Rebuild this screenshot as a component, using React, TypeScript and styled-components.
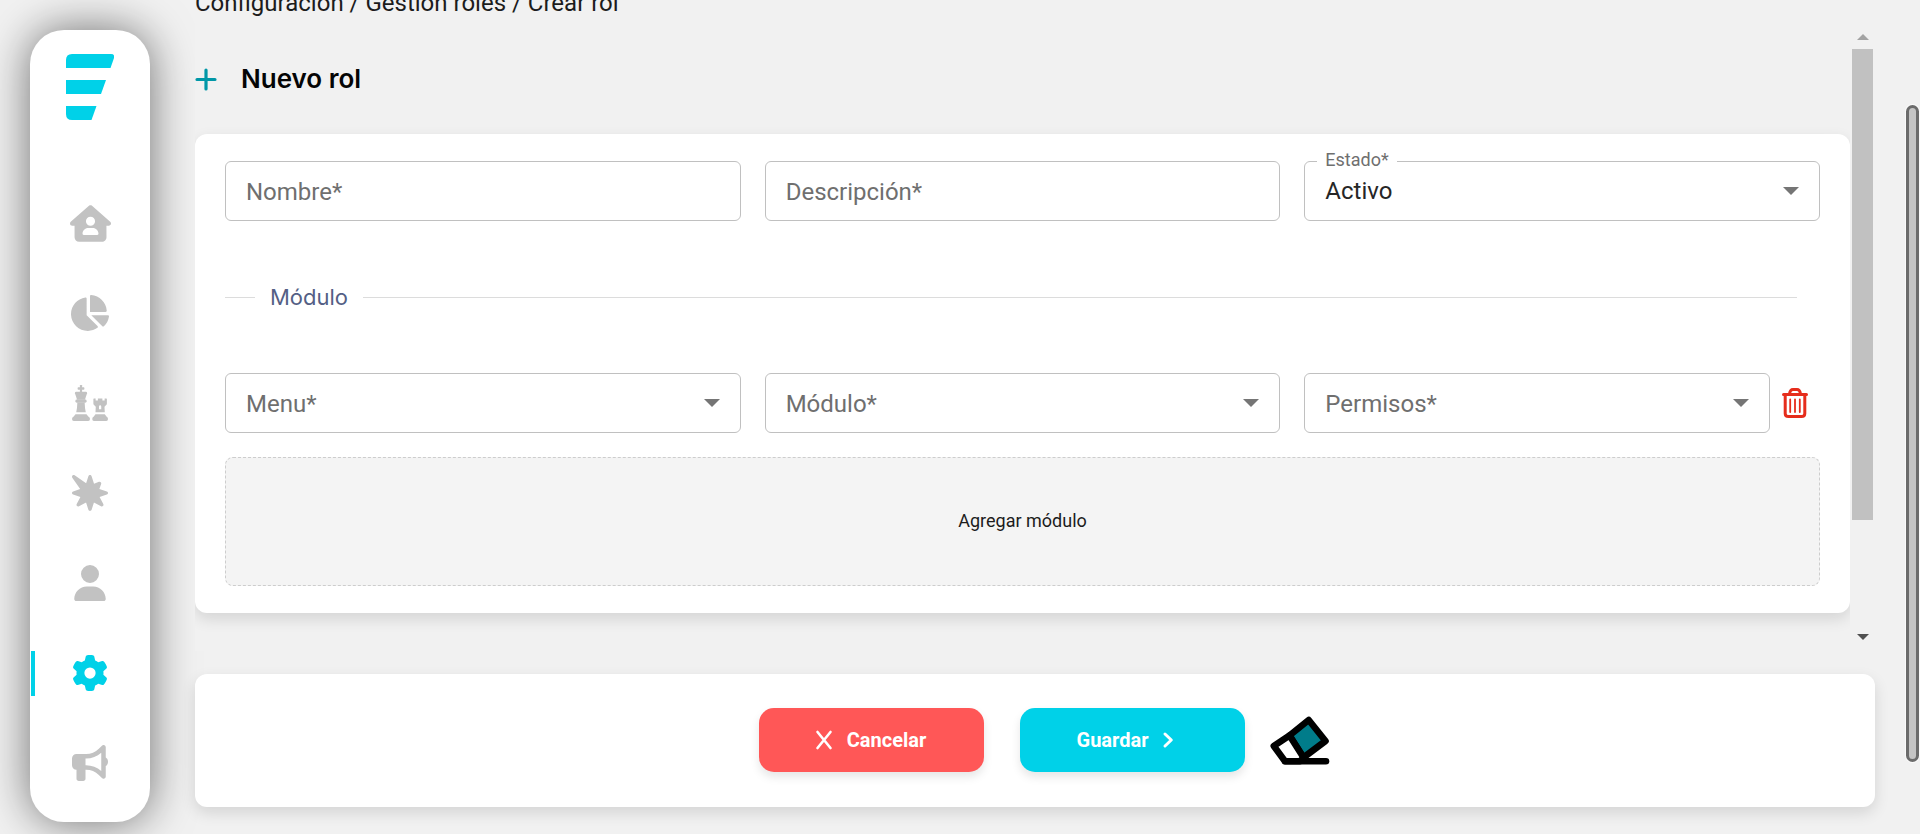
import React from "react";
import styled, { createGlobalStyle } from "styled-components";
import { FaHouseUser, FaBurst, FaUser, FaGear, FaBullhorn } from "react-icons/fa6";
import { FaChartPie } from "react-icons/fa";

const color = {
  page: "#f1f1f1",
  accent: "#00d1e8",
  danger: "#ff5757",
  icon: "#c2c2c2",
  border: "#c0c0c0",
  label: "#6f6f6f",
};

const GlobalStyle = createGlobalStyle`
  *, *::before, *::after { box-sizing: border-box; }
  body {
    margin: 0;
    background: ${color.page};
    font-family: Roboto, "Liberation Sans", sans-serif;
    color: #1c1c1c;
    overflow: hidden;
  }
  button, input, select { font: inherit; }
`;

const Shell = styled.div`
  display: flex;
  min-height: 100vh;
  padding-right: 45px;
`;

const Sidebar = styled.nav`
  flex: none;
  display: flex;
  flex-direction: column;
  align-items: center;
  width: 120px;
  margin: 30px 45px 12px 30px;
  padding-top: 24px;
  background: #fff;
  border-radius: 34px;
  box-shadow: 0 0 45px rgba(0, 0, 0, 0.54);
`;

const Logo = styled.svg`
  width: 48px;
  height: 66px;
  margin-bottom: 58px;
`;

const NavList = styled.ul`
  list-style: none;
  width: 100%;
  margin: 0;
  padding: 0 1px;
`;

const NavLink = styled.a<{ $active?: boolean; $iconWidth: number }>`
  position: relative;
  display: flex;
  align-items: center;
  justify-content: center;
  height: 90px;
  color: ${(p) => (p.$active ? color.accent : color.icon)};

  svg {
    height: ${(p) => Math.max(36, p.$iconWidth)}px;
    width: ${(p) => p.$iconWidth}px;
  }

  &::before {
    content: "";
    position: absolute;
    left: 0;
    width: 4px;
    height: 45px;
    background: ${(p) => (p.$active ? color.accent : "transparent")};
  }
`;

const Main = styled.main`
  position: relative;
  flex: 1;
  min-width: 0;
  display: flex;
  flex-direction: column;
`;

const Breadcrumb = styled.div`
  height: 36px;
  margin-top: -12px;
  font-size: 24px;
  line-height: 30px;
`;

const ScrollRow = styled.div`
  display: flex;
  margin-bottom: 23px;
  overflow: hidden;
  background: ${color.page};
`;

const ScrollContent = styled.div`
  flex: 1;
  min-width: 0;
  padding-bottom: 38px;
  overflow: hidden;
`;

const TitleBar = styled.header`
  display: flex;
  align-items: center;
  gap: 24px;
  height: 110px;
`;

const Title = styled.h1`
  margin: 0;
  font-family: Inter, Roboto, sans-serif;
  font-size: 26px;
  line-height: 36px;
  font-weight: 600;
  color: #050505;
`;

const Card = styled.section`
  padding: 27px 30px;
  background: #fff;
  border-radius: 12px;
  box-shadow: 0 6px 15px rgba(0, 0, 0, 0.12);
`;

const FieldGrid = styled.div`
  display: grid;
  grid-template-columns: repeat(3, minmax(0, 1fr));
  column-gap: 24px;
`;

const FieldWithAction = styled.div`
  display: grid;
  grid-template-columns: minmax(0, 1fr) 50px;
  align-items: center;
`;

const Field = styled.div`
  position: relative;
  display: grid;
  align-items: center;
  height: 60px;

  > * {
    grid-area: 1 / 1;
  }
`;

const controlStyle = `
  width: 100%;
  height: 60px;
  padding: 0 20px;
  border: 1px solid ${color.border};
  border-radius: 6px;
  background: transparent;
  color: #262626;
  font-size: 24px;
  outline: none;
`;

const TextInput = styled.input`
  ${controlStyle}
`;

const Select = styled.select`
  ${controlStyle}
  appearance: none;
`;

const FieldLabel = styled.label`
  justify-self: start;
  padding: 2px 0 0 21px;
  font-size: 24px;
  line-height: 30px;
  color: ${color.label};
  pointer-events: none;
`;

const FloatingLabel = styled.label`
  position: absolute;
  top: -13px;
  left: 13px;
  padding: 0 8px;
  background: #fff;
  font-size: 18px;
  line-height: 24px;
  color: ${color.label};
`;

const Caret = styled.span`
  justify-self: end;
  margin-right: 21px;
  border: 8px solid transparent;
  border-top-color: #757575;
  border-bottom: 0;
  pointer-events: none;
`;

const Divider = styled.div`
  display: flex;
  align-items: center;
  gap: 15px;
  margin: 58px 23px 58px 0;
  height: 36px;

  &::before,
  &::after {
    content: "";
    height: 1px;
    background: #dcdcdc;
  }
  &::before {
    width: 30px;
  }
  &::after {
    flex: 1;
  }
`;

const DividerText = styled.h2`
  margin: 0;
  font-family: Inter, Roboto, sans-serif;
  font-size: 22px;
  line-height: 36px;
  font-weight: 400;
  color: #545f85;
`;

const IconButton = styled.button`
  display: flex;
  align-items: center;
  justify-content: center;
  padding: 0;
  border: 0;
  background: none;
`;

const AddModule = styled.button`
  display: block;
  width: 100%;
  height: 129px;
  margin-top: 24px;
  padding: 0 0 2px;
  border: 1px dashed #cdcdcd;
  border-radius: 8px;
  background: #f4f4f4;
  color: #1c1c1c;
  font-size: 18px;
`;

const InnerScrollbar = styled.div`
  flex: none;
  display: flex;
  flex-direction: column;
  align-items: center;
  width: 25px;
  padding: 10px 0 11px;
`;

const InnerThumb = styled.div`
  width: 21px;
  height: 471px;
  margin: 9px 0 auto;
  background: #c1c1c1;
`;

const ScrollArrow = styled.span<{ $down?: boolean }>`
  border: 6px solid transparent;
  ${(p) =>
    p.$down
      ? "border-top-color: #505050; border-bottom: 0;"
      : "border-bottom-color: #a3a3a3; border-top: 0;"}
`;

const ActionBar = styled.footer`
  display: flex;
  align-items: center;
  justify-content: center;
  min-height: 133px;
  padding: 0 0 1px 20px;
  background: #fff;
  border-radius: 12px;
  box-shadow: 0 6px 15px rgba(0, 0, 0, 0.12);
`;

const ActionButton = styled.button<{ $tone: "danger" | "accent" }>`
  display: flex;
  align-items: center;
  justify-content: center;
  gap: 14px;
  width: 225px;
  height: 64px;
  margin-right: ${(p) => (p.$tone === "danger" ? 36 : 24)}px;
  padding: 0 ${(p) => (p.$tone === "danger" ? 2 : 14)}px 0 0;
  border: 0;
  border-radius: 15px;
  background: ${(p) => color[p.$tone]};
  box-shadow: 0 5px 10px rgba(0, 0, 0, 0.1);
  color: #fff;
  font-size: 20px;
  font-weight: 700;
`;

const PageThumb = styled.div`
  position: fixed;
  top: 105px;
  right: 1px;
  bottom: 72px;
  width: 13px;
  border: 3px solid #6b6b6b;
  border-radius: 7px;
  background: #c4c4c4;
  box-shadow: 0 0 0 1px #fafafa;
`;

const PlusIcon = () => (
  <svg width="22" height="24" viewBox="0 0 22 24" stroke="#0097a7" strokeWidth="3.2" strokeLinecap="round">
    <path d="M11 3V22M2 12.500H20" />
  </svg>
);

const ChessIcon = () => (
  <svg viewBox="0 0 512 512" fill="currentColor">
    <rect x="112" y="0" width="32" height="100" rx="8" />
    <rect x="80" y="32" width="96" height="34" rx="10" />
    <path d="M56 96H200Q218 98 214 116L184 208H72L42 116Q38 98 56 96Z" />
    <rect x="48" y="206" width="160" height="46" rx="20" />
    <path d="M76 250H180Q182 330 196 386H60Q74 330 76 250Z" />
    <path d="M50 416H206L232 448Q256 460 256 484Q256 512 230 512H26Q0 512 0 484Q0 460 24 448Z" />
    <path
      fillRule="evenodd"
      d="M304 200Q304 192 312 192H336V222H368V192H432V222H464V192H488Q496 192 496 200V262Q496 276 486 286L462 308L466 386H334L338 308L314 286Q304 276 304 262ZM384 344H416V304Q414 288 400 288Q386 288 384 304Z"
    />
    <path d="M334 416H466L490 448Q512 460 512 484Q512 512 488 512H312Q288 512 288 484Q288 460 310 448Z" />
  </svg>
);

const TrashIcon = () => (
  <svg width="28" height="32" viewBox="0 0 28 32" fill="none" stroke="#e62d1c" strokeLinecap="round" strokeLinejoin="round">
    <path strokeWidth="3" d="M2.500 7.500H25.500M8.500 7C9 3.500 10 2.500 12 2.500H16C18 2.500 19 3.500 19.500 7M4.200 8V26.500Q4.200 29.500 7.500 29.500H20.500Q23.800 29.500 23.800 26.500V8" />
    <path strokeWidth="1.8" d="M9.200 12.500V25M14 12.500V25M18.800 12.500V25" />
  </svg>
);

const CloseIcon = () => (
  <svg width="18" height="20" viewBox="0 0 18 20" stroke="#fff" strokeWidth="2.6" strokeLinecap="round">
    <path d="M2.500 2L15.500 18M15.500 2L2.500 18" />
  </svg>
);

const ChevronIcon = () => (
  <svg width="12" height="18" viewBox="0 0 12 18" fill="none" stroke="#fff" strokeWidth="3" strokeLinecap="round" strokeLinejoin="round">
    <path d="M3 3L9.300 9L3 15" />
  </svg>
);

const EraserIcon = () => (
  <svg width="62" height="52" viewBox="0 0 62 52" fill="none" stroke="#000" strokeWidth="6.6" strokeLinejoin="round" strokeLinecap="round">
    <path fill="#007c8a" d="M20.500 21.500L39.700 6L56.500 27L34.500 43.500Z" />
    <path fill="#fff" d="M20.500 21.500L4.800 32L16 47.200H31L34.500 43.500Z" />
    <path d="M16 47.200H57" />
  </svg>
);

const navItems = [
  { name: "Inicio", Icon: FaHouseUser, width: 41 },
  { name: "Reportes", Icon: FaChartPie, width: 38 },
  { name: "Estrategia", Icon: ChessIcon, width: 36 },
  { name: "Novedades", Icon: FaBurst, width: 36 },
  { name: "Usuarios", Icon: FaUser, width: 36 },
  { name: "Configuración", Icon: FaGear, width: 36, active: true },
  { name: "Anuncios", Icon: FaBullhorn, width: 36 },
];

const TextField = ({ id, label }: { id: string; label: string }) => (
  <Field>
    <FieldLabel htmlFor={id}>{label}</FieldLabel>
    <TextInput id={id} type="text" />
  </Field>
);

const SelectField = ({ id, label }: { id: string; label: string }) => (
  <Field>
    <FieldLabel htmlFor={id}>{label}</FieldLabel>
    <Select id={id} defaultValue="">
      <option value="" />
    </Select>
    <Caret />
  </Field>
);

export default function App() {
  return (
    <>
      <GlobalStyle />
      <Shell>
        <Sidebar aria-label="Principal">
          <Logo viewBox="0 0 48 66" fill={color.accent}>
            <path d="M0 14V6Q0 0 6 0H45Q49 0 48 4L44.500 14Z" />
            <path d="M0 26H40L35 40H0Z" />
            <path d="M0 52H30.500L25.500 66H6Q0 66 0 60Z" />
          </Logo>
          <NavList>
            {navItems.map(({ name, Icon, width, active }) => (
              <li key={name}>
                <NavLink href="#" aria-label={name} $active={active} $iconWidth={width}>
                  <Icon />
                </NavLink>
              </li>
            ))}
          </NavList>
        </Sidebar>

        <Main>
          <Breadcrumb>Configuración / Gestión roles / Crear rol</Breadcrumb>
          <ScrollRow>
            <ScrollContent>
              <TitleBar>
                <PlusIcon />
                <Title>Nuevo rol</Title>
              </TitleBar>
              <Card>
                <FieldGrid>
                  <TextField id="nombre" label="Nombre*" />
                  <TextField id="descripcion" label="Descripción*" />
                  <Field>
                    <Select id="estado" defaultValue="activo">
                      <option value="activo">Activo</option>
                      <option value="inactivo">Inactivo</option>
                    </Select>
                    <FloatingLabel htmlFor="estado">Estado*</FloatingLabel>
                    <Caret />
                  </Field>
                </FieldGrid>
                <Divider>
                  <DividerText>Módulo</DividerText>
                </Divider>
                <FieldGrid>
                  <SelectField id="menu" label="Menu*" />
                  <SelectField id="modulo" label="Módulo*" />
                  <FieldWithAction>
                    <SelectField id="permisos" label="Permisos*" />
                    <IconButton type="button" aria-label="Eliminar módulo">
                      <TrashIcon />
                    </IconButton>
                  </FieldWithAction>
                </FieldGrid>
                <AddModule type="button">Agregar módulo</AddModule>
              </Card>
            </ScrollContent>
            <InnerScrollbar aria-hidden="true">
              <ScrollArrow />
              <InnerThumb />
              <ScrollArrow $down />
            </InnerScrollbar>
          </ScrollRow>
          <ActionBar>
            <ActionButton type="button" $tone="danger">
              <CloseIcon />
              Cancelar
            </ActionButton>
            <ActionButton type="submit" $tone="accent">
              Guardar
              <ChevronIcon />
            </ActionButton>
            <IconButton type="button" aria-label="Limpiar">
              <EraserIcon />
            </IconButton>
          </ActionBar>
        </Main>
      </Shell>
      <PageThumb aria-hidden="true" />
    </>
  );
}
